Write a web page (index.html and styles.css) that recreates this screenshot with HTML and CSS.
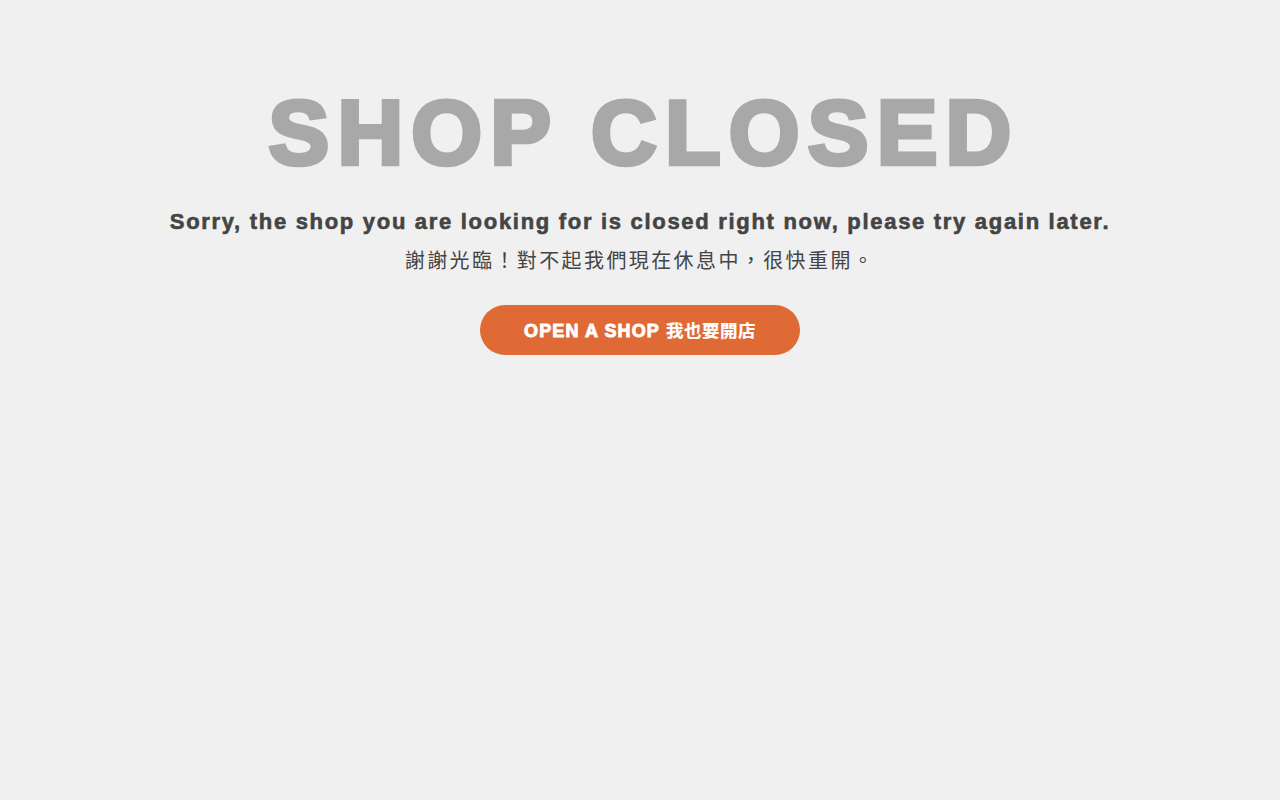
FILE: index.html
```html
<!DOCTYPE html>
<html lang="zh-Hant">
<head>
<meta charset="utf-8">
<title>Shop Closed</title>
<link rel="stylesheet" href="styles.css">
</head>
<body>
<main class="closed">
  <h1 class="closed-title">SHOP CLOSED</h1>
  <p class="closed-msg">Sorry, the shop you are looking for is closed right now, please try again later.</p>
  <p class="closed-msg-zh">謝謝光臨！對不起我們現在休息中，很快重開。</p>
  <a class="open-btn" href="#">OPEN A SHOP <span class="zh">我也要開店</span></a>
</main>
</body>
</html>
```
FILE: styles.css
```css
html, body {
  margin: 0;
  padding: 0;
  background: #f0f0f0;
}
body {
  font-family: "Liberation Sans", Arial, "Noto Sans CJK TC", sans-serif;
  color: #444;
}
.closed {
  display: flex;
  flex-direction: column;
  align-items: center;
  padding-top: 81px;
}
.closed-title {
  margin: 0;
  font-size: 91px;
  line-height: 104px;
  font-weight: 700;
  color: #a8a8a8;
  -webkit-text-stroke: 4.5px #a8a8a8;
  letter-spacing: 8.2px;
  padding-left: 8px;
}
.closed-msg {
  margin: 23px 0 0;
  font-size: 22px;
  line-height: 28px;
  font-weight: 700;
  letter-spacing: 1.7px;
  -webkit-text-stroke: 0.6px #444;
}
.closed-msg-zh {
  margin: 10px 0 0;
  font-family: "Noto Sans CJK TC", sans-serif;
  font-size: 20px;
  line-height: 28px;
  letter-spacing: 2.4px;
}
.open-btn {
  margin-top: 31px;
  width: 320px;
  height: 50px;
  border-radius: 25px;
  background: #e06a35;
  color: #fff;
  text-decoration: none;
  display: flex;
  align-items: baseline;
  justify-content: center;
  line-height: 50px;
  font-size: 18px;
  font-weight: 700;
  letter-spacing: 1.1px;
  -webkit-text-stroke: 0.9px #fff;
}
.open-btn .zh {
  font-family: "Noto Sans CJK TC", sans-serif;
  font-size: 17.5px;
  margin-left: 6px;
  letter-spacing: 0.5px;
  -webkit-text-stroke: 0.2px #fff;
}
```
